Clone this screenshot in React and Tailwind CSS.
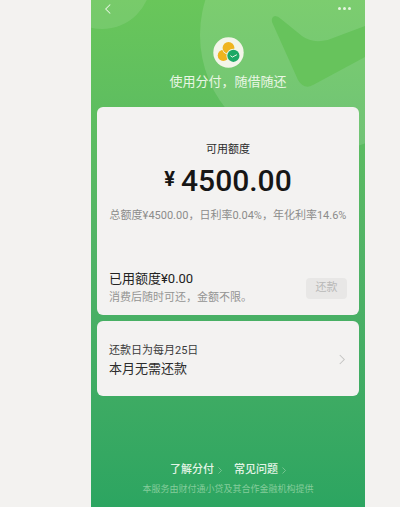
import React from 'react';

const Chevron = ({ className, flip }) => (
  <svg viewBox="0 0 8 14" fill="none" stroke="currentColor" strokeWidth="1.4" className={className} aria-hidden="true">
    <path d={flip ? 'M7 1L1 7l6 6' : 'M1 1l6 6-6 6'} />
  </svg>
);

const Backdrop = () => (
  <svg
    viewBox="0 0 274 160"
    className="absolute top-0 right-0 w-[274px] h-[160px]"
    aria-hidden="true"
  >
    <circle cx="11" cy="-20" r="49" fill="#fff" fillOpacity="0.1" />
    <circle cx="227" cy="35" r="118" fill="#fff" fillOpacity="0.13" />
    <path
      d="M181 22Q180 17 184 16Q187 16 190 19L211 36Q219 42 230 41Q236 41 242 38L274 26V57L222 85Q213 90 207 80Z"
      fill="#67c35c"
    />
  </svg>
);

const Logo = () => (
  <svg viewBox="0 0 31 31" className="w-[31px] h-[31px]" aria-hidden="true">
    <circle cx="15.5" cy="15.5" r="15.2" fill="#f3f5e9" />
    <circle cx="10.3" cy="18.4" r="5.6" fill="#efb41f" />
    <circle cx="15.5" cy="10.8" r="6.6" fill="#f3f5e9" />
    <circle cx="15.5" cy="10.8" r="5.9" fill="#efb41f" />
    <circle cx="20.4" cy="18.8" r="7" fill="#f3f5e9" />
    <circle cx="20.4" cy="18.8" r="6.1" fill="#1ca865" />
    <path d="M17.4 18.6l1.9 1.5 4.6-2.4" fill="none" stroke="#e9f6e6" strokeWidth="1" />
  </svg>
);

const Header = () => (
  <header className="relative flex flex-col items-center">
    <nav className="flex w-full h-[17px] items-center justify-between px-2 text-[#e6f5e0]">
      <button type="button" aria-label="返回">
        <Chevron flip className="w-[6px] h-[12px]" />
      </button>
      <button type="button" aria-label="更多" className="flex gap-[2px]">
        <span className="w-[3px] h-[3px] rounded-full bg-current" />
        <span className="w-[3px] h-[3px] rounded-full bg-current" />
        <span className="w-[3px] h-[3px] rounded-full bg-current" />
      </button>
    </nav>
    <div className="mt-5">
      <Logo />
    </div>
    <h1 className="mt-1 text-[13px] leading-5 text-[#e9f6e4]">使用分付，随借随还</h1>
  </header>
);

const QuotaCard = () => (
  <section className="relative mt-[15px] rounded-md bg-[#f3f2f1] px-3 pt-[34px] pb-2">
    <div className="flex flex-col items-center">
      <h2 className="text-[11px] leading-[18px] text-[#2c2c2c]">可用额度</h2>
      <p className="mt-1 flex items-start gap-[6px] font-['Roboto',sans-serif] font-medium text-[#161616]">
        <span className="text-[20px] leading-8 font-bold">¥</span>
        <span className="text-[30px] leading-9">4500.00</span>
      </p>
      <p className="mt-2 whitespace-nowrap text-[11px] leading-[18px] text-[#8c8c8b]">
        总额度¥4500.00，日利率0.04%，年化利率14.6%
      </p>
    </div>
    <div className="mt-11 flex items-center justify-between">
      <div>
        <p className="text-[13px] leading-5 text-[#222]">已用额度¥0.00</p>
        <p className="text-[11px] leading-[18px] text-[#949493]">消费后随时可还，金额不限。</p>
      </div>
      <button type="button" className="w-[41px] h-[21px] rounded-sm bg-[#e8e7e6] text-[11px] text-[#b9b9b8]">
        还款
      </button>
    </div>
  </section>
);

const RepayCard = () => (
  <section className="relative mt-[6px] rounded-md bg-[#f3f2f1]">
    <a href="#repay" className="flex h-[75px] items-center justify-between px-3 pt-[2px]">
      <span>
        <span className="block text-[11px] leading-[18px] text-[#3a3a3a]">还款日为每月25日</span>
        <span className="block text-[13px] leading-[18px] text-[#2c2c2c]">本月无需还款</span>
      </span>
      <Chevron className="mr-[2px] w-[6px] h-[11px] text-[#c4c4c3]" />
    </a>
  </section>
);

const FooterLink = ({ href, children }) => (
  <a href={href} className="flex items-center gap-1 text-[11px] leading-5 font-medium text-[#e3f4e6]">
    {children}
    <Chevron className="w-[4px] h-[7px] text-[#8fd1a4]" />
  </a>
);

const Footer = () => (
  <footer className="relative mt-16 flex flex-col items-center pb-2">
    <div className="flex gap-3">
      <FooterLink href="#about">了解分付</FooterLink>
      <FooterLink href="#faq">常见问题</FooterLink>
    </div>
    <p className="text-[9px] leading-[18px] text-[#84cc9b]">本服务由财付通小贷及其合作金融机构提供</p>
  </footer>
);

const App = () => {
  return (
    <div className="min-h-screen bg-[#f3f2f0] pl-[91px] pr-[35px] font-['Roboto','Noto_Sans_CJK_SC',sans-serif]">
      <main className="relative min-h-screen overflow-hidden bg-linear-to-b from-[#69c65a] via-[#50b366] to-[#2ca561] px-[6px]">
        <Backdrop />
        <Header />
        <QuotaCard />
        <RepayCard />
        <Footer />
      </main>
    </div>
  );
};

export default App;
